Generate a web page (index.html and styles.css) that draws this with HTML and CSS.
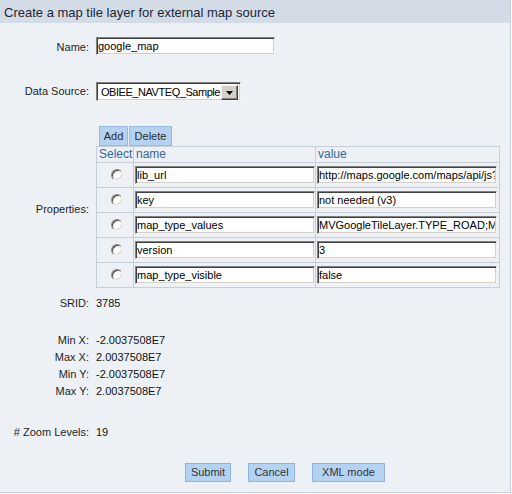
FILE: index.html
```html
<!DOCTYPE html>
<html>
<head>
<meta charset="utf-8">
<link rel="stylesheet" href="styles.css">
</head>
<body>
<div class="panel">
  <div class="title">Create a map tile layer for external map source</div>
  <div class="form">
    <div class="row row-name">
      <div class="lbl lbl-name">Name:</div>
      <div class="val"><input class="text name-input" type="text" value="google_map"></div>
    </div>
    <div class="row row-ds">
      <div class="lbl lbl-ds">Data Source:</div>
      <div class="val">
        <div class="select">
          <span class="select-text">OBIEE_NAVTEQ_Sample</span>
          <span class="arrow"><svg width="7" height="4" viewBox="0 0 7 4"><polygon points="0,0 7,0 3.5,4" fill="#000"/></svg></span>
        </div>
      </div>
    </div>
    <div class="row row-props">
      <div class="lbl lbl-props">Properties:</div>
      <div class="val">
        <div class="tbl-buttons">
          <button class="btn btn-add">Add</button>
          <button class="btn btn-del">Delete</button>
        </div>
        <table class="props">
          <tr class="head">
            <th class="c-sel">Select</th>
            <th class="c-name">name</th>
            <th class="c-value">value</th>
          </tr>
          <tr>
            <td class="c-sel"><span class="radio"></span></td>
            <td class="c-name"><input class="text cell-input" type="text" value="lib_url"></td>
            <td class="c-value"><input class="text cell-input" type="text" value="http://maps.google.com/maps/api/js?v=3&amp;sensor=false"></td>
          </tr>
          <tr>
            <td class="c-sel"><span class="radio"></span></td>
            <td class="c-name"><input class="text cell-input" type="text" value="key"></td>
            <td class="c-value"><input class="text cell-input" type="text" value="not needed (v3)"></td>
          </tr>
          <tr>
            <td class="c-sel"><span class="radio"></span></td>
            <td class="c-name"><input class="text cell-input" type="text" value="map_type_values"></td>
            <td class="c-value"><input class="text cell-input" type="text" value="MVGoogleTileLayer.TYPE_ROAD;MVGoogleTileLayer.TYPE_SATELLITE"></td>
          </tr>
          <tr>
            <td class="c-sel"><span class="radio"></span></td>
            <td class="c-name"><input class="text cell-input" type="text" value="version"></td>
            <td class="c-value"><input class="text cell-input" type="text" value="3"></td>
          </tr>
          <tr>
            <td class="c-sel"><span class="radio"></span></td>
            <td class="c-name"><input class="text cell-input" type="text" value="map_type_visible"></td>
            <td class="c-value"><input class="text cell-input" type="text" value="false"></td>
          </tr>
        </table>
      </div>
    </div>
    <div class="row row-srid">
      <div class="lbl">SRID:</div>
      <div class="val">3785</div>
    </div>
    <div class="row row-minx">
      <div class="lbl">Min X:</div>
      <div class="val">-2.0037508E7</div>
    </div>
    <div class="row">
      <div class="lbl">Max X:</div>
      <div class="val">2.0037508E7</div>
    </div>
    <div class="row">
      <div class="lbl">Min Y:</div>
      <div class="val">-2.0037508E7</div>
    </div>
    <div class="row">
      <div class="lbl">Max Y:</div>
      <div class="val">2.0037508E7</div>
    </div>
    <div class="row row-zoom">
      <div class="lbl">#&nbsp;Zoom Levels:</div>
      <div class="val">19</div>
    </div>
    <div class="actions">
      <button class="btn2 b-submit">Submit</button>
      <button class="btn2 b-cancel">Cancel</button>
      <button class="btn2 b-xml">XML mode</button>
    </div>
  </div>
</div>
</body>
</html>
```
FILE: styles.css
```css
html, body {
  margin: 0;
  padding: 0;
  background: #ffffff;
}
body {
  font-family: "Liberation Sans", Arial, sans-serif;
  font-size: 11px;
  color: #1e1e1e;
}
.panel {
  width: 510px;
  height: 492px;
  background: #edf1f5;
  border-right: 1px solid #c5ced8;
  border-bottom: 1px solid #c5ced8;
}
.title {
  height: 23px;
  box-sizing: border-box;
  padding: 5px 0 0 4px;
  background: #d3dce6;
  font-size: 13px;
  line-height: 16px;
  color: #1a2636;
  white-space: nowrap;
}
.row {
  display: grid;
  grid-template-columns: 89px 1fr;
  column-gap: 7px;
  align-items: start;
}
.lbl {
  text-align: right;
  line-height: 17px;
  white-space: nowrap;
  color: #1e1e1e;
}
.val {
  line-height: 17px;
  color: #111;
  white-space: nowrap;
}
.row-name { margin-top: 14px; height: 18px; }
.lbl-name { padding-top: 2px; }
.row-ds { margin-top: 27px; height: 19px; }
.lbl-ds { padding-top: 1px; }
.row-props { margin-top: 25px; }
.lbl-props { padding-top: 75px; }
.row-srid { margin-top: 7px; }
.row-minx { margin-top: 20px; }
.row-zoom { margin-top: 24px; }

.text {
  display: block;
  box-sizing: border-box;
  height: 18px;
  margin: 0;
  padding: 0 1px;
  font-family: "Liberation Sans", Arial, sans-serif;
  font-size: 11px;
  color: #000;
  background: #fff;
  border: 1px solid;
  border-color: #808080 #f2f2f2 #f2f2f2 #808080;
  box-shadow: inset 1px 1px 0 #404040, inset -1px -1px 0 #d4d0c8;
  outline: none;
}
.name-input { width: 179px; }

.select {
  display: flex;
  width: 145px;
  height: 19px;
  box-sizing: border-box;
  background: #fff;
  border: 1px solid;
  border-color: #808080 #f2f2f2 #f2f2f2 #808080;
  box-shadow: inset 1px 1px 0 #404040, inset -1px -1px 0 #d4d0c8;
  padding: 2px 2px 1px 2px;
}
.select-text {
  flex: 1;
  overflow: hidden;
  white-space: nowrap;
  padding-left: 2px;
  line-height: 15px;
  letter-spacing: -0.45px;
  color: #000;
}
.arrow {
  display: flex;
  align-items: center;
  justify-content: center;
  width: 17px;
  height: 15px;
  box-sizing: border-box;
  background: #d4d0c8;
  border: 1px solid;
  border-color: #f4f4f4 #404040 #404040 #f4f4f4;
  box-shadow: inset -1px -1px 0 #808080;
}
.arrow svg { display: block; margin-left: -1px; margin-top: 1px; }

.tbl-buttons {
  display: flex;
  gap: 1px;
  padding-left: 3px;
  height: 20px;
}
.btn {
  box-sizing: border-box;
  height: 20px;
  margin: 0;
  padding: 0;
  background: #b6d2f1;
  border: 1px solid #9ab9de;
  font-family: "Liberation Sans", Arial, sans-serif;
  font-size: 11px;
  line-height: 18px;
  color: #2b2b2b;
}
.btn-add { width: 29px; }
.btn-del { width: 43px; }

.props {
  border-collapse: separate;
  border-spacing: 0;
  border-top: 1px solid #c6ced7;
  border-left: 1px solid #c6ced7;
}
.props th, .props td {
  border-right: 1px solid #c6ced7;
  border-bottom: 1px solid #c6ced7;
  padding: 0;
}
.props th {
  height: 15px;
  font-weight: normal;
  font-size: 12px;
  line-height: 15px;
  color: #35679c;
  text-align: left;
  padding-left: 2px;
  white-space: nowrap;
}
.props th.c-sel { width: 34px; }
.props th.c-name { width: 179px; }
.props th.c-value { width: 181px; }
.props td {
  height: 25px;
  box-sizing: border-box;
  vertical-align: middle;
}
.props td.c-sel { width: 36px; }
.props td.c-name { width: 181px; padding-left: 1px; }
.props td.c-value { width: 183px; padding-left: 1px; }
.cell-input { width: 180px; }

.radio {
  display: block;
  width: 12px;
  height: 12px;
  margin-left: 14px;
  box-sizing: border-box;
  border-radius: 50%;
  border: 1px solid;
  border-color: #8a8a8a #f4f4f4 #f4f4f4 #8a8a8a;
  background: #fff;
  box-shadow: inset 1px 1px 0 #404040, inset -1px -1px 0 #d4d0c8;
}

.actions {
  display: flex;
  gap: 17px;
  padding-left: 185px;
  margin-top: 22px;
}
.btn2 {
  box-sizing: border-box;
  height: 19px;
  margin: 0;
  padding: 0;
  background: #b4d3f3;
  border: 1px solid #8fb3da;
  font-family: "Liberation Sans", Arial, sans-serif;
  font-size: 11px;
  line-height: 17px;
  color: #333;
}
.b-submit { width: 46px; }
.b-cancel { width: 47px; }
.b-xml { width: 73px; }
```
